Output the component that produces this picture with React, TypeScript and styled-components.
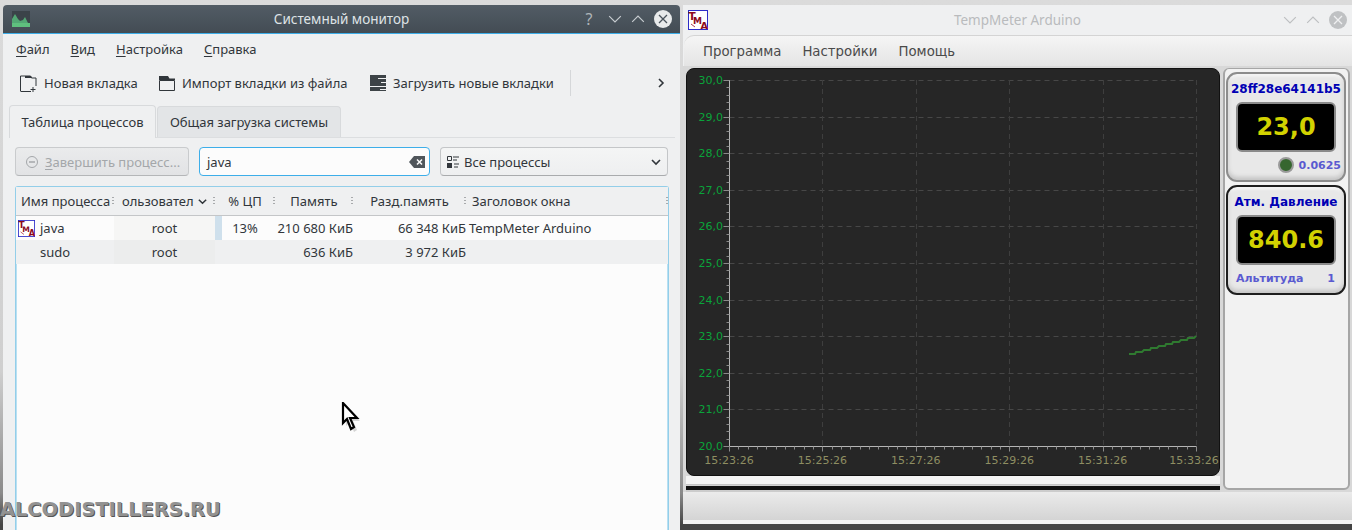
import React from "react"
import styled, { createGlobalStyle } from "styled-components"

const GlobalStyle = createGlobalStyle`
  html, body {
    margin: 0;
    padding: 0;
    width: 1352px;
    height: 530px;
    overflow: hidden;
  }
  #root {
    width: 1352px;
    height: 530px;
  }
`

const Desktop = styled.div`
  position: relative;
  box-sizing: border-box;
  width: 1352px;
  height: 530px;
  padding: 5px 0 0 3px;
  display: flex;
  gap: 3px;
  overflow: hidden;
  background: linear-gradient(#dbdbdb 0, #cfcfcf 70%, #8a8a8a 93%, #444 99%);
  font-family: "Noto Sans", sans-serif;
`

/* ---------- KDE system monitor window ---------- */

const MonitorWindow = styled.div`
  width: 677px;
  flex: none;
  display: flex;
  flex-direction: column;
  background: #eff0f1;
  color: #31363b;
  font-size: 13px;
  border-radius: 4px 4px 0 0;
`

const MonitorTitle = styled.div`
  box-sizing: border-box;
  height: 29px;
  flex: none;
  position: relative;
  display: flex;
  align-items: center;
  justify-content: center;
  background: linear-gradient(#525c65, #434c54);
  border-bottom: 1px solid #3daee9;
  border-radius: 4px 4px 0 0;
  color: #dfe3e6;
  font-size: 13.5px;
`

const TitleIconSlot = styled.div`
  position: absolute;
  left: 9px;
  top: 6px;
  display: flex;
`

const TitleButtons = styled.div`
  position: absolute;
  left: 576px;
  top: 0;
  height: 28px;
  display: flex;
  align-items: center;
  gap: 9px;
`

const MenuRow = styled.div`
  height: 30px;
  flex: none;
  display: flex;
  align-items: center;
  gap: 21px;
  padding-left: 13px;
`

const Underlined = styled.span`
  text-decoration: underline;
  text-underline-offset: 2px;
  text-decoration-thickness: 1px;
`

const ToolRow = styled.div`
  height: 38px;
  flex: none;
  display: flex;
  align-items: center;
  padding-left: 17px;
`

const ToolItem = styled.div<{ $width: number }>`
  width: ${(p) => p.$width}px;
  flex: none;
  display: flex;
  align-items: center;
  gap: 7px;
  white-space: nowrap;
`

const ToolSeparator = styled.div`
  width: 1px;
  height: 26px;
  flex: none;
  background: #d5d7d9;
`

const ToolMore = styled.div`
  margin-left: 84px;
  display: flex;
`

const TabRow = styled.div`
  height: 33px;
  margin: 2px 5px 0 6px;
  flex: none;
  display: flex;
  align-items: flex-end;
  border-bottom: 1px solid #dcdee0;
`

const Tab = styled.div<{ $active?: boolean }>`
  box-sizing: border-box;
  height: ${(p) => (p.$active ? 33 : 31)}px;
  width: ${(p) => (p.$active ? 147 : 184)}px;
  margin-left: ${(p) => (p.$active ? 0 : 1)}px;
  margin-bottom: ${(p) => (p.$active ? -1 : 0)}px;
  flex: none;
  display: flex;
  align-items: center;
  justify-content: center;
  background: ${(p) => (p.$active ? "#eff0f1" : "#e3e5e7")};
  border: 1px solid #d8dadc;
  border-bottom: none;
  border-radius: 4px 4px 0 0;
`

const FilterRow = styled.div`
  height: 29px;
  margin: 9px 12px 0 12px;
  flex: none;
  display: flex;
  gap: 10px;
`

const EndButton = styled.div`
  box-sizing: border-box;
  width: 174px;
  flex: none;
  display: flex;
  align-items: center;
  gap: 6px;
  padding-left: 9px;
  background: linear-gradient(#eaebec, #e2e3e5);
  border: 1px solid #c9cbcd;
  border-bottom-color: #b4b6b8;
  border-radius: 4px;
  color: #a4a7aa;
  white-space: nowrap;
`

const SearchBox = styled.div`
  box-sizing: border-box;
  width: 231px;
  flex: none;
  display: flex;
  align-items: center;
  justify-content: space-between;
  padding: 0 4px 0 7px;
  background: #fcfcfc;
  border: 1px solid #3daee9;
  border-radius: 4px;
`

const ComboBox = styled.div`
  box-sizing: border-box;
  flex: 1;
  display: flex;
  align-items: center;
  gap: 5px;
  padding: 0 5px 0 6px;
  background: linear-gradient(#f4f5f5, #eeeff0);
  border: 1px solid #c4c6c8;
  border-bottom-color: #a9abad;
  border-radius: 4px;
`

const ComboLabel = styled.span`
  flex: 1;
`

const TableFrame = styled.div`
  flex: 1;
  margin: 10px 11px 0 12px;
  background: #fcfcfc;
  border: 1px solid #93cee9;
  border-bottom: none;
  border-radius: 3px 3px 0 0;
  box-shadow: inset 1px 0 #b9e0f2, inset -1px 0 #b9e0f2;
`

const columns = "98px 101px 60px 78px 113px 1fr"

const TableHeader = styled.div`
  height: 28px;
  display: grid;
  grid-template-columns: ${columns};
  background: #eff0f1;
  border-bottom: 1px solid #c4c6c8;
`

const HeaderCell = styled.div<{ $pad?: number }>`
  position: relative;
  display: flex;
  align-items: center;
  justify-content: ${(p) => (p.$pad === undefined ? "center" : "flex-start")};
  padding-left: ${(p) => p.$pad ?? 0}px;
  white-space: nowrap;
  overflow: hidden;

  &::after {
    content: "";
    position: absolute;
    right: 0;
    top: 9px;
    width: 2px;
    height: 10px;
    background: radial-gradient(circle, #a8aaac 1px, transparent 1px) 0 0 / 2px 3px;
  }
`

const Row = styled.div<{ $alt?: boolean }>`
  height: 24px;
  display: grid;
  grid-template-columns: ${columns};
  align-items: stretch;
  background: ${(p) => (p.$alt ? "#eff0f1" : "#fcfcfc")};
`

const Cell = styled.div<{ $align?: string; $tint?: string; $pad?: number; $trail?: number }>`
  display: flex;
  align-items: center;
  justify-content: ${(p) => p.$align ?? "flex-start"};
  padding-left: ${(p) => p.$pad ?? 0}px;
  padding-right: ${(p) => p.$trail ?? 0}px;
  background: ${(p) => p.$tint ?? "transparent"};
  white-space: nowrap;
`

const NameCell = styled(Cell)`
  gap: 5px;
  padding-left: 2px;
`

const NoIcon = styled.span`
  width: 17px;
`

const CpuCell = styled(Cell)`
  justify-content: center;
  box-shadow: inset 7px 0 #cfe0ec;
  padding-left: 0;
`

const SortMark = styled.span`
  margin-left: 3px;
  display: flex;
`

/* ---------- TempMeter window ---------- */

const MeterWindow = styled.div`
  flex: 1;
  height: 519px;
  display: flex;
  flex-direction: column;
  background: #eff0f1;
`

const MeterTitle = styled.div`
  height: 30px;
  flex: none;
  position: relative;
  display: flex;
  align-items: center;
  justify-content: center;
  color: #b9bbbd;
  font-size: 13.5px;
`

const MeterTitleIcon = styled.div`
  position: absolute;
  left: 5px;
  top: 5px;
  display: flex;
`

const MeterTitleButtons = styled.div`
  position: absolute;
  right: 5px;
  top: 0;
  height: 30px;
  display: flex;
  align-items: center;
  gap: 9px;
`

const MeterMenu = styled.div`
  box-sizing: border-box;
  height: 31px;
  margin-left: 1px;
  flex: none;
  display: flex;
  align-items: center;
  gap: 21px;
  padding-left: 19px;
  background: linear-gradient(#f5f5f5, #e4e4e4);
  border-top: 1px solid #d4d4d4;
  border-radius: 10px 0 0 0;
  color: #4a4a4a;
  font-family: "DejaVu Sans", sans-serif;
  font-size: 13.3px;
`

const MeterBody = styled.div`
  flex: 1;
  display: flex;
  gap: 3px;
  padding: 2px 2px 0 3px;
  background: #d8d8d8;
`

const ChartColumn = styled.div`
  width: 534px;
  flex: none;
  display: flex;
  flex-direction: column;
`

const ChartPanel = styled.div`
  height: 408px;
  flex: none;
  box-sizing: border-box;
  display: flex;
  background: #262626;
  border: 1px solid #111;
  border-radius: 8px;
`

const ChartSvg = styled.svg`
  display: block;
`

const Splitter = styled.div`
  height: 16px;
  flex: none;
  background: linear-gradient(#f4f4f4 0, #f4f4f4 50%, #bdbdbd 50%, #d8d8d8 62%, #111 62%, #111 88%, #ccc 88%);
`

const Sidebar = styled.div`
  flex: 1;
  box-sizing: border-box;
  margin-bottom: 2px;
  padding: 3px 0 0 1px;
  display: flex;
  flex-direction: column;
  gap: 3px;
  background: #f2f2f2;
  border: 2px solid #a6a6a6;
  border-top-width: 1px;
  border-radius: 6px;
`

const SensorCard = styled.div<{ $dark?: boolean }>`
  box-sizing: border-box;
  width: 120px;
  height: 110px;
  display: flex;
  flex-direction: column;
  align-items: center;
  padding-top: 8px;
  background: #e8e8e8;
  border: 2px solid ${(p) => (p.$dark ? "#1e1e1e" : "#8c8c8c")};
  border-radius: 11px;
  box-shadow: inset 0 -3px 4px #c4c4c4, inset 0 2px 3px #f8f8f8;
`

const SensorName = styled.div`
  height: 15px;
  line-height: 15px;
  color: #0000b4;
  font-family: "DejaVu Sans", sans-serif;
  font-size: 12px;
  font-weight: 700;
  white-space: nowrap;
`

const SensorDisplay = styled.div`
  box-sizing: border-box;
  width: 100px;
  height: 50px;
  margin-top: 5px;
  flex: none;
  display: flex;
  align-items: center;
  justify-content: center;
  background: #000;
  border: 2px solid #8a8a8a;
  border-radius: 6px;
  color: #d2d200;
  font-family: "DejaVu Sans", sans-serif;
  font-size: 24px;
  font-weight: 700;
`

const SensorFooter = styled.div<{ $spread?: boolean }>`
  width: 100%;
  box-sizing: border-box;
  height: 14px;
  margin-top: 6px;
  display: flex;
  align-items: center;
  justify-content: ${(p) => (p.$spread ? "space-between" : "flex-end")};
  gap: 5px;
  padding: ${(p) => (p.$spread ? "0 9px 0 8px" : "0 3px 0 0")};
  color: #5a5ad0;
  font-family: "DejaVu Sans", sans-serif;
  font-size: 11px;
  font-weight: 700;
`

const Led = styled.span`
  width: 12px;
  height: 12px;
  border: 2px solid #9a9a9a;
  border-radius: 50%;
  background: #36662f;
`

const StatusBar = styled.div`
  height: 32px;
  flex: none;
  background: linear-gradient(#ebebeb, #d4d4d4 88%, #f2f2f2 88%);
`

/* ---------- overlays ---------- */

const Watermark = styled.div`
  position: absolute;
  left: 0;
  top: 498px;
  color: #929292;
  font-family: "DejaVu Sans", sans-serif;
  font-size: 19.4px;
  font-weight: 700;
  text-shadow: 1px 1px 0 #555;
  white-space: nowrap;
`

const CursorSlot = styled.div`
  position: absolute;
  left: 341px;
  top: 402px;
  display: flex;
`

/* ---------- drawings ---------- */

const TmaLogo = ({ size = 20 }: { size?: number }) => (
  <svg width={size} height={size} viewBox="0 0 20 20">
    <rect x="0.5" y="0.5" width="19" height="19" fill="#fff" stroke="#2c2cc8" />
    <g fill="#8b0a1e" fontFamily="DejaVu Sans" fontWeight="700">
      <text x="0.5" y="9.5" fontSize="10.5">T</text>
      <text x="5" y="14" fontSize="9">M</text>
      <text x="12.5" y="18.5" fontSize="9.5">A</text>
    </g>
    <path d="M3 14l4 3" stroke="#b04050" strokeWidth="1" />
  </svg>
)

const MonitorLogo = () => (
  <svg width="18" height="16" viewBox="0 0 18 16">
    <rect width="18" height="16" fill="#3b4349" />
    <path d="M0 16V8l3-5 3 5 2 2 3-1 2-3 3 6 2 1v3z" fill="#53a874" />
    <rect y="12" width="18" height="4" fill="#5fc07e" />
  </svg>
)

const Chevron = ({ up, color, size = 12 }: { up?: boolean; color: string; size?: number }) => (
  <svg width={size} height={size} viewBox="0 0 12 12">
    <path d={up ? "M1 8.5l5-5 5 5" : "M1 3.5l5 5 5-5"} fill="none" stroke={color} strokeWidth="1" />
  </svg>
)

const BoldChevronDown = ({ size = 12 }: { size?: number }) => (
  <svg width={size} height={size} viewBox="0 0 12 12">
    <path d="M2 4l4 4 4-4" fill="none" stroke="#31363b" strokeWidth="1.6" />
  </svg>
)

const BoldChevronRight = () => (
  <svg width="12" height="12" viewBox="0 0 12 12">
    <path d="M4 2l4 4-4 4" fill="none" stroke="#31363b" strokeWidth="1.6" />
  </svg>
)

const CloseDisc = ({ bg, fg }: { bg: string; fg: string }) => (
  <svg width="18" height="18" viewBox="0 0 18 18">
    <circle cx="9" cy="9" r="9" fill={bg} />
    <path d="M5 5l8 8M13 5l-8 8" stroke={fg} strokeWidth="1.3" />
  </svg>
)

const HelpMark = styled.span`
  width: 20px;
  text-align: center;
  color: #aeb4b9;
  font-size: 16px;
`

const NewTabIcon = () => (
  <svg width="17" height="17" viewBox="0 0 17 17">
    <path d="M.5 16V1h10l1 2H16v8M11 16.5H.5" fill="none" stroke="#31363b" />
    <path d="M5 1h6l1 2H5z" fill="#31363b" />
    <path d="M13 12v5M10.5 14.500h5" stroke="#31363b" />
  </svg>
)

const ImportIcon = () => (
  <svg width="16" height="15" viewBox="0 0 16 15">
    <path d="M.5 4.500h15v10H.5z" fill="none" stroke="#31363b" />
    <path d="M0 0h9l1.500 2.500H16V4H0z" fill="#31363b" />
  </svg>
)

const DownloadIcon = () => (
  <svg width="16" height="16" viewBox="0 0 16 16">
    <rect width="16" height="16" fill="#3d4347" />
    <path d="M8 3.500h8M11 7.500h5M0 11.500h16M10 14.500h6" stroke="#eff0f1" />
  </svg>
)

const StopIcon = () => (
  <svg width="14" height="14" viewBox="0 0 14 14">
    <circle cx="7" cy="7" r="5.500" fill="none" stroke="#a4a7aa" />
    <path d="M4 7h6" stroke="#a4a7aa" strokeWidth="1.500" />
  </svg>
)

const ClearIcon = () => (
  <svg width="16" height="12" viewBox="0 0 16 12">
    <path d="M5 0h11v12H5L0 6z" fill="#50565b" />
    <path d="M8 3.500l5 5M13 3.500l-5 5" stroke="#fcfcfc" strokeWidth="1.500" />
  </svg>
)

const ListIcon = () => (
  <svg width="12" height="12" viewBox="0 0 12 12">
    <path d="M.5.500h4v4h-4z" fill="none" stroke="#31363b" />
    <path d="M0 7h5v5H0z" fill="#31363b" />
    <path d="M6 1h6M6 4h4M7 8h5M7 11h4" stroke="#31363b" />
  </svg>
)

const CursorIcon = () => (
  <svg width="22" height="32" viewBox="0 0 22 32">
    <path d="M3 2l14 15h-7l4 9-3 2-4-10-4 4z" fill="#888" opacity="0.35" transform="translate(2 2)" />
    <path d="M2 1l14 15h-7l4 9-3 2-4-10-4 4z" fill="#fff" stroke="#000" strokeWidth="2.2" />
  </svg>
)

/* chart geometry is in svg coordinates (svg starts at x=687, y=69 on the page) */
const left = 42
const top = 11
const yStep = 36.6
const xStep = 93.4
const yValues = ["30,0", "29,0", "28,0", "27,0", "26,0", "25,0", "24,0", "23,0", "22,0", "21,0", "20,0"]
const xLabels = ["15:23:26", "15:25:26", "15:27:26", "15:29:26", "15:31:26", "15:33:26"]
const svgWidth = 532
const crisp = (v: number) => Math.round(v) + 0.5
const bottom = crisp(top + yStep * 10)
const right = crisp(left + xStep * 5)
const axisX = crisp(left)
const rowY = (i: number) => crisp(top + i * yStep)
const colX = (i: number) => crisp(left + i * xStep)

// the temperature steps up about 0.05 every few samples
const tracePoints = () => {
  const pts: string[] = []
  for (let i = 0; i < 9; i++) {
    const x = Math.round(442 + i * 7.4)
    const y = 285 - i * 2
    pts.push(`${x},${y}`, `${x + 6},${y}`)
  }
  pts.push("509,267")
  return pts.join(" ")
}

const TempChart = () => (
  <ChartSvg width={svgWidth} height="406" viewBox={`0 0 ${svgWidth} 406`}>
    {yValues.map((_, i) => (
      <line key={i} x1={axisX} x2={right} y1={rowY(i)} y2={rowY(i)} stroke="#474747" strokeDasharray="5 4" />
    ))}
    {xLabels.map((_, i) =>
      i > 0 ? (
        <line key={i} x1={colX(i)} x2={colX(i)} y1={top} y2={bottom} stroke="#3e3e3e" strokeDasharray="5 4" />
      ) : null
    )}
    <line x1={axisX} x2={axisX} y1={top} y2={bottom} stroke="#b5b5b5" />
    <line x1={axisX} x2={right} y1={bottom} y2={bottom} stroke="#b5b5b5" />
    {Array.from({ length: 51 }, (_, i) => (
      <line
        key={i}
        x1={axisX - (i % 5 === 0 ? 6 : 3)}
        x2={axisX}
        y1={crisp(top + i * (yStep / 5))}
        y2={crisp(top + i * (yStep / 5))}
        stroke="#8a8a8a"
      />
    ))}
    {Array.from({ length: 51 }, (_, i) => (
      <line
        key={i}
        x1={crisp(left + i * (xStep / 10))}
        x2={crisp(left + i * (xStep / 10))}
        y1={bottom}
        y2={bottom + (i % 10 === 0 ? 5 : 3)}
        stroke="#8a8a8a"
      />
    ))}
    <g fontFamily="DejaVu Sans" fontSize="11" fill="#0aa33a" textAnchor="end">
      {yValues.map((v, i) => (
        <text key={v} x={left - 6} y={top + i * yStep + 4}>{v}</text>
      ))}
    </g>
    <g fontFamily="DejaVu Sans" fontSize="11" fill="#8e8e62" textAnchor="middle">
      {xLabels.map((v, i) => (
        <text key={v} x={Math.min(left + i * xStep, svgWidth - 25)} y={bottom + 17}>{v}</text>
      ))}
    </g>
    <polyline points={tracePoints()} fill="none" stroke="#2f7a30" strokeWidth="2" />
  </ChartSvg>
)

const App = () => (
  <>
    <GlobalStyle />
    <Desktop>
      <MonitorWindow>
        <MonitorTitle>
          <TitleIconSlot>
            <MonitorLogo />
          </TitleIconSlot>
          Системный монитор
          <TitleButtons>
            <HelpMark>?</HelpMark>
            <Chevron color="#c8cdd1" size={14} />
            <Chevron up color="#c8cdd1" size={14} />
            <CloseDisc bg="#e8eaeb" fg="#4a535b" />
          </TitleButtons>
        </MonitorTitle>
        <MenuRow>
          <span><Underlined>Ф</Underlined>айл</span>
          <span><Underlined>В</Underlined>ид</span>
          <span><Underlined>Н</Underlined>астройка</span>
          <span><Underlined>С</Underlined>правка</span>
        </MenuRow>
        <ToolRow>
          <ToolItem $width={139}><NewTabIcon />Новая вкладка</ToolItem>
          <ToolItem $width={211}><ImportIcon />Импорт вкладки из файла</ToolItem>
          <ToolItem $width={200}><DownloadIcon />Загрузить новые вкладки</ToolItem>
          <ToolSeparator />
          <ToolMore><BoldChevronRight /></ToolMore>
        </ToolRow>
        <TabRow>
          <Tab $active>Таблица процессов</Tab>
          <Tab>Общая загрузка системы</Tab>
        </TabRow>
        <FilterRow>
          <EndButton><StopIcon /><span><Underlined>З</Underlined>авершить процесс...</span></EndButton>
          <SearchBox>java<ClearIcon /></SearchBox>
          <ComboBox>
            <ListIcon />
            <ComboLabel>Все процессы</ComboLabel>
            <BoldChevronDown />
          </ComboBox>
        </FilterRow>
        <TableFrame>
          <TableHeader>
            <HeaderCell $pad={5}>Имя процесса</HeaderCell>
            <HeaderCell $pad={8}>
              ользовател
              <SortMark><BoldChevronDown size={11} /></SortMark>
            </HeaderCell>
            <HeaderCell>% ЦП</HeaderCell>
            <HeaderCell>Память</HeaderCell>
            <HeaderCell>Разд.память</HeaderCell>
            <HeaderCell $pad={6}>Заголовок окна</HeaderCell>
          </TableHeader>
          <Row>
            <NameCell><TmaLogo size={17} />java</NameCell>
            <Cell $align="center" $tint="#f6f6f5">root</Cell>
            <CpuCell>13%</CpuCell>
            <Cell $align="flex-end">210 680 КиБ</Cell>
            <Cell $align="flex-end">66 348 КиБ</Cell>
            <Cell $pad={3}>TempMeter Arduino</Cell>
          </Row>
          <Row $alt>
            <NameCell><NoIcon />sudo</NameCell>
            <Cell $align="center" $tint="#eceded">root</Cell>
            <Cell />
            <Cell $align="flex-end">636 КиБ</Cell>
            <Cell $align="flex-end">3 972 КиБ</Cell>
            <Cell />
          </Row>
        </TableFrame>
      </MonitorWindow>

      <MeterWindow>
        <MeterTitle>
          <MeterTitleIcon><TmaLogo /></MeterTitleIcon>
          TempMeter Arduino
          <MeterTitleButtons>
            <Chevron color="#bdbfc1" size={14} />
            <Chevron up color="#bdbfc1" size={14} />
            <CloseDisc bg="#bfc1c3" fg="#eff0f1" />
          </MeterTitleButtons>
        </MeterTitle>
        <MeterMenu>
          <span>Программа</span>
          <span>Настройки</span>
          <span>Помощь</span>
        </MeterMenu>
        <MeterBody>
          <ChartColumn>
            <ChartPanel><TempChart /></ChartPanel>
            <Splitter />
          </ChartColumn>
          <Sidebar>
            <SensorCard>
              <SensorName>28ff28e64141b5</SensorName>
              <SensorDisplay>23,0</SensorDisplay>
              <SensorFooter><Led />0.0625</SensorFooter>
            </SensorCard>
            <SensorCard $dark>
              <SensorName>Атм. Давление</SensorName>
              <SensorDisplay>840.6</SensorDisplay>
              <SensorFooter $spread><span>Альтитуда</span><span>1</span></SensorFooter>
            </SensorCard>
          </Sidebar>
        </MeterBody>
        <StatusBar />
      </MeterWindow>

      <Watermark>ALCODISTILLERS.RU</Watermark>
      <CursorSlot><CursorIcon /></CursorSlot>
    </Desktop>
  </>
)

export default App
